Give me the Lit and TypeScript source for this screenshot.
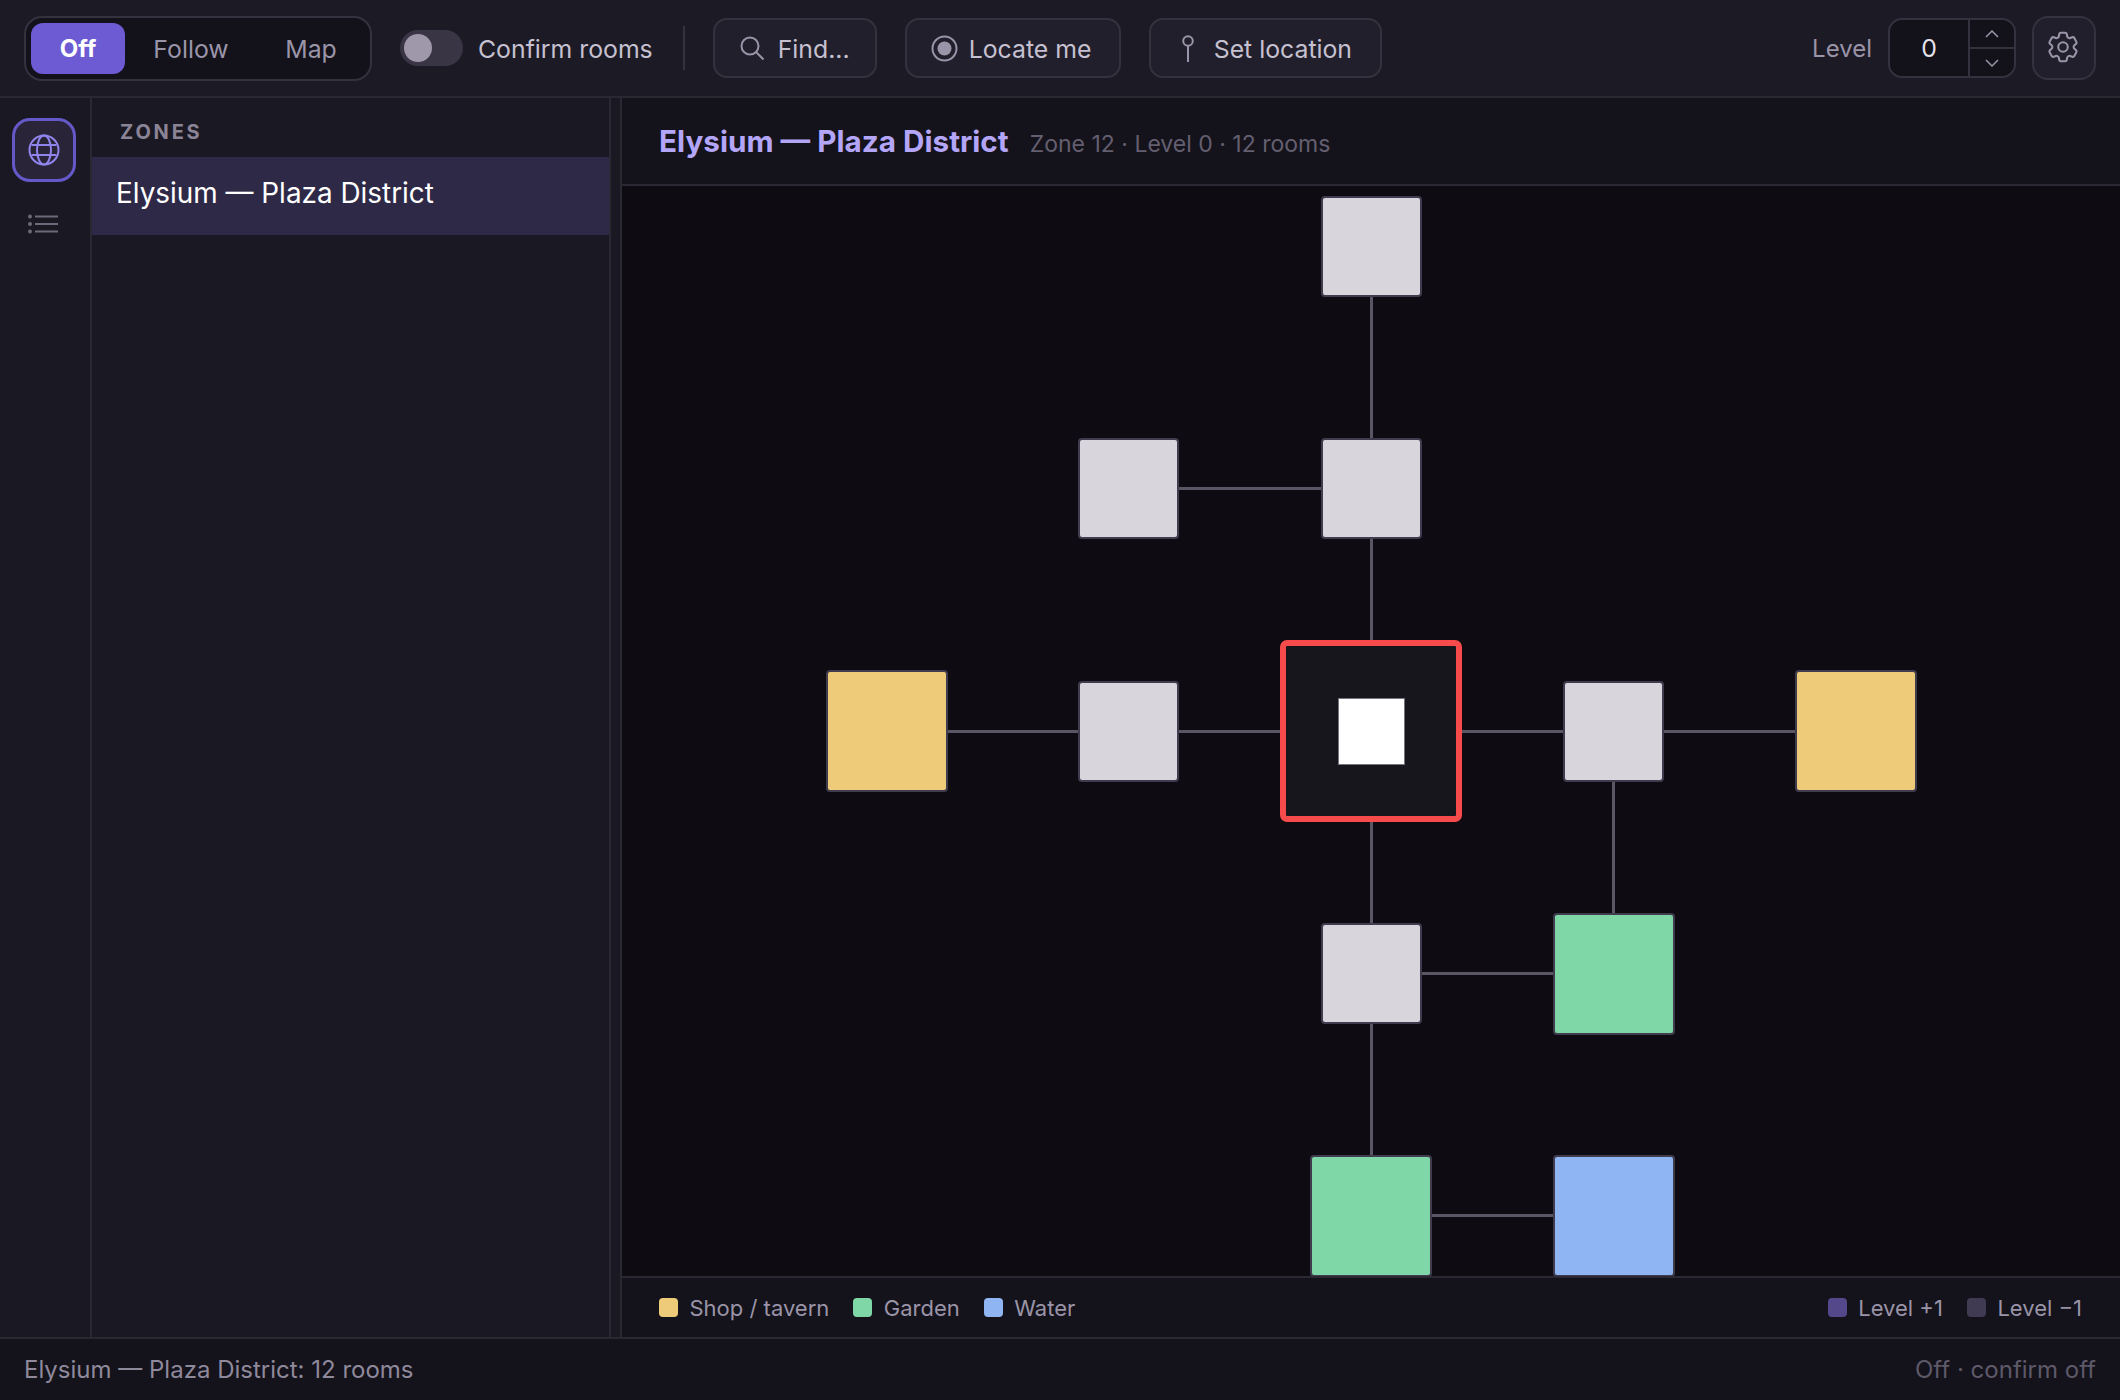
import { LitElement, html, css, svg } from "lit";
import { customElement } from "lit/decorators.js";

type Room = { c: number; r: number; kind: string };
const COLS = [886.5, 1128.5, 1371, 1613.5, 1855.5];
const ROWS = [246.5, 488.5, 731, 973.5, 1215.5];
const ROOMS: Room[] = [
  { c: 2, r: 0, kind: "plain" },
  { c: 1, r: 1, kind: "plain" },
  { c: 2, r: 1, kind: "plain" },
  { c: 0, r: 2, kind: "shop" },
  { c: 1, r: 2, kind: "plain" },
  { c: 2, r: 2, kind: "cur" },
  { c: 3, r: 2, kind: "plain" },
  { c: 4, r: 2, kind: "shop" },
  { c: 2, r: 3, kind: "plain" },
  { c: 3, r: 3, kind: "garden" },
  { c: 2, r: 4, kind: "garden" },
  { c: 3, r: 4, kind: "water" },
];
const LINKS: [number, number, number, number][] = [
  [2, 0, 2, 1],
  [1, 1, 2, 1],
  [2, 1, 2, 2],
  [0, 2, 1, 2],
  [1, 2, 2, 2],
  [2, 2, 3, 2],
  [3, 2, 4, 2],
  [3, 2, 3, 3],
  [2, 2, 2, 3],
  [2, 3, 3, 3],
  [2, 3, 2, 4],
  [2, 4, 3, 4],
];
const CANVAS_X = 622;
const CANVAS_Y = 186;
const SIZE: Record<string, number> = { plain: 101, shop: 122, garden: 122, water: 122, cur: 182 };
const px = (v: number) => Math.floor(v) + 0.5;

@customElement("app-root")
export class AppRoot extends LitElement {
  static styles = css`
    :host {
      display: flex;
      flex-direction: column;
      width: 2120px;
      height: 1400px;
      overflow: hidden;
      font-family: Inter, "Liberation Sans", sans-serif;
      background: #1a1822;
      color: #d8d5dd;
      font-size: 24px;
    }
    .top {
      height: 98px;
      box-sizing: border-box;
      flex: none;
      display: flex;
      align-items: center;
      padding: 0 24px;
      background: #1c1a25;
      border-bottom: 2px solid #2a2833;
      font-size: 24.8px;
    }
    .seg {
      display: flex;
      align-items: stretch;
      width: 348px;
      height: 65px;
      box-sizing: border-box;
      padding: 5px;
      background: #13111a;
      border: 2px solid #35323f;
      border-radius: 18px;
    }
    .seg span {
      display: flex;
      align-items: center;
      justify-content: center;
      color: #9a94a8;
      border-radius: 12px;
      padding-top: 1px;
    }
    .seg .on {
      width: 94px;
      background: #6c5bd3;
      color: #fff;
      font-weight: 700;
      font-size: 24px;
    }
    .seg .follow { width: 132px; }
    .seg .map { width: 100px; margin-left: 4px; }
    .toggle {
      margin-left: 28px;
      width: 63px;
      height: 36px;
      border-radius: 18px;
      background: #3a3545;
      display: flex;
      align-items: center;
      padding-left: 4px;
      box-sizing: border-box;
    }
    .knob {
      width: 28px;
      height: 28px;
      border-radius: 50%;
      background: #9f98ab;
    }
    .lbl { margin-left: 15px; color: #c6c1d0; padding-top: 1px; }
    .div {
      margin: 0 28px 0 30px;
      width: 2px;
      height: 44px;
      background: #35323f;
    }
    .btn {
      display: flex;
      align-items: center;
      height: 60px;
      box-sizing: border-box;
      border: 2px solid #35323f;
      border-radius: 14px;
      background: #221f2c;
      color: #c6c1d0;
    }
    .btn span { padding-top: 1px; }
    .btn svg { flex: none; }
    .b1 { width: 164px; margin-right: 28px; padding-left: 25px; gap: 14px; }
    .b2 { width: 216px; margin-right: 28px; padding-left: 24px; gap: 11px; }
    .b3 { width: 233px; padding-left: 30px; gap: 19px; }
    .grow { flex: 1; }
    .lvl { color: #9a94a8; margin-right: 16px; font-size: 24px; }
    .stepper {
      display: flex;
      width: 128px;
      height: 60px;
      box-sizing: border-box;
      border: 2px solid #35323f;
      border-radius: 14px;
      background: #13111a;
      overflow: hidden;
    }
    .val {
      flex: 1;
      display: flex;
      align-items: center;
      justify-content: center;
      color: #e4e1ea;
      border-right: 2px solid #35323f;
    }
    .arrows { width: 44px; display: flex; flex-direction: column; }
    .arrows div {
      flex: 1;
      display: flex;
      align-items: center;
      justify-content: center;
    }
    .arrows div:first-child { border-bottom: 2px solid #35323f; }
    .gear {
      margin-left: 16px;
      width: 64px;
      height: 64px;
      box-sizing: border-box;
      border: 2px solid #35323f;
      border-radius: 16px;
      background: #221f2c;
      display: flex;
      align-items: center;
      justify-content: center;
      padding: 0 3px 3px 0;
    }
    .mid { flex: 1; display: flex; min-height: 0; }
    .rail {
      width: 92px;
      box-sizing: border-box;
      flex: none;
      border-right: 2px solid #2a2833;
      display: flex;
      flex-direction: column;
      align-items: center;
      padding: 20px 2px 0 0;
      gap: 10px;
      background: #1a1822;
    }
    .rb {
      width: 64px;
      height: 64px;
      box-sizing: border-box;
      border-radius: 18px;
      display: flex;
      align-items: center;
      justify-content: center;
      border: 3px solid transparent;
    }
    .rb.active { border-color: #6558c8; background: #2a2438; }
    .list { padding-right: 2px; }
    .zones { width: 517px; flex: none; background: #1a1822; display: flex; flex-direction: column; }
    .zh {
      height: 59px;
      display: flex;
      align-items: center;
      padding: 9px 0 0 28px;
      box-sizing: border-box;
      font-size: 20px;
      font-weight: 700;
      letter-spacing: 2.8px;
      color: #8a8496;
    }
    .zi {
      height: 78px;
      box-sizing: border-box;
      display: flex;
      align-items: center;
      padding: 0 0 6px 24px;
      background: #2e2947;
      color: #fff;
      font-size: 27.9px;
    }
    .split {
      width: 13px;
      box-sizing: border-box;
      flex: none;
      border-left: 2px solid #2a2833;
      border-right: 2px solid #2a2833;
      background: #1a1822;
    }
    .main { flex: 1; display: flex; flex-direction: column; min-width: 0; background: #14121a; }
    .th {
      height: 88px;
      box-sizing: border-box;
      flex: none;
      display: flex;
      align-items: center;
      padding-left: 37px;
      border-bottom: 2px solid #2a2833;
    }
    .thi { display: flex; align-items: baseline; gap: 21px; }
    .tt { font-size: 29.7px; font-weight: 700; color: #b3a5f7; }
    .ts { color: #645f70; font-size: 23px; }
    .canvas { flex: 1; position: relative; background: #0e0c12; overflow: hidden; }
    .links { position: absolute; inset: 0; width: 100%; height: 100%; }
    .room {
      position: absolute;
      box-sizing: border-box;
      border: 2px solid #3f3c4e;
      border-radius: 4px;
    }
    .plain { background: #d8d5dd; }
    .shop { background: #eecb78; }
    .garden { background: #7fd6a6; }
    .water { background: #8fb5f2; }
    .cur {
      background: #18161d;
      border: 6px solid #f74a4a;
      border-radius: 7px;
      display: flex;
      align-items: center;
      justify-content: center;
    }
    .cur i {
      display: block;
      width: 67px;
      height: 67px;
      box-sizing: border-box;
      background: #fff;
      border: 1px solid #77747f;
    }
    .legend {
      height: 61px;
      box-sizing: border-box;
      flex: none;
      display: flex;
      align-items: center;
      padding: 0 38px 0 37px;
      border-top: 2px solid #2a2833;
      font-size: 22px;
      color: #9a94a8;
    }
    .li { display: flex; align-items: center; gap: 11.5px; margin-right: 24px; }
    .li:last-child { margin-right: 0; }
    .sw { width: 19px; height: 19px; border-radius: 4px; }
    .status {
      height: 63px;
      box-sizing: border-box;
      flex: none;
      display: flex;
      align-items: center;
      justify-content: space-between;
      padding: 0 24px;
      background: #14121a;
      border-top: 2px solid #2a2833;
      color: #8f899c;
    }
    .status .r { color: #5e5969; }
  `;

  private link(l: [number, number, number, number]) {
    return svg`<line x1=${px(COLS[l[0]] - CANVAS_X)} y1=${px(ROWS[l[1]] - CANVAS_Y)} x2=${px(COLS[l[2]] - CANVAS_X)} y2=${px(ROWS[l[3]] - CANVAS_Y)} stroke="#5a5666" stroke-width="3"></line>`;
  }

  private room(r: Room) {
    const s = SIZE[r.kind];
    const st = `left:${Math.round(COLS[r.c] - CANVAS_X - s / 2)}px;top:${Math.round(ROWS[r.r] - CANVAS_Y - s / 2)}px;width:${s}px;height:${s}px`;
    return html`<div class="room ${r.kind}" style=${st}>${r.kind === "cur" ? html`<i></i>` : ""}</div>`;
  }

  render() {
    return html`
      <div class="top">
        <div class="seg">
          <span class="on">Off</span><span class="follow">Follow</span><span class="map">Map</span>
        </div>
        <div class="toggle"><div class="knob"></div></div>
        <div class="lbl">Confirm rooms</div>
        <div class="div"></div>
        <div class="btn b1">
          <svg width="24" height="24" viewBox="0 0 24 24" fill="none" stroke="#9a94a8" stroke-width="2"><circle cx="10" cy="10" r="8.5"></circle><path d="M16 16l7.5 7.5"></path></svg>
          <span>Find...</span>
        </div>
        <div class="btn b2">
          <svg width="27" height="27" viewBox="0 0 27 27"><circle cx="13.5" cy="13.5" r="12" fill="none" stroke="#9a94a8" stroke-width="2"></circle><circle cx="13.5" cy="13.5" r="7" fill="#9a94a8"></circle></svg>
          <span>Locate me</span>
        </div>
        <div class="btn b3">
          <svg width="14" height="27" viewBox="0 0 14 27" fill="none" stroke="#9a94a8" stroke-width="2"><circle cx="7" cy="6" r="4.8"></circle><path d="M7 10.8V27"></path></svg>
          <span>Set location</span>
        </div>
        <div class="grow"></div>
        <div class="lvl">Level</div>
        <div class="stepper">
          <div class="val">0</div>
          <div class="arrows">
            <div><svg width="14" height="8" viewBox="0 0 14 8" fill="none" stroke="#9a94a8" stroke-width="1.5"><path d="M1 7l6-6 6 6"></path></svg></div>
            <div><svg width="14" height="8" viewBox="0 0 14 8" fill="none" stroke="#9a94a8" stroke-width="1.5"><path d="M1 1l6 6 6-6"></path></svg></div>
          </div>
        </div>
        <div class="gear">
          <svg width="38" height="38" viewBox="0 0 24 24" fill="none" stroke="#9a94a8" stroke-width="1.3" stroke-linejoin="round" stroke-linecap="round"><path d="M9.594 3.94c.09-.542.56-.94 1.11-.94h2.593c.55 0 1.02.398 1.11.94l.213 1.281c.063.374.313.686.645.87.074.04.147.083.22.127.325.196.72.257 1.075.124l1.217-.456a1.125 1.125 0 011.37.49l1.296 2.247a1.125 1.125 0 01-.26 1.431l-1.003.827c-.293.24-.438.613-.431.992a6.759 6.759 0 010 .255c-.007.378.138.75.43.99l1.005.828c.424.35.534.954.26 1.43l-1.298 2.247a1.125 1.125 0 01-1.369.491l-1.217-.456c-.355-.133-.75-.072-1.076.124a6.57 6.57 0 01-.22.128c-.331.183-.581.495-.644.869l-.213 1.28c-.09.543-.56.941-1.11.941h-2.594c-.55 0-1.02-.398-1.11-.94l-.213-1.281c-.062-.374-.312-.686-.644-.87a6.52 6.52 0 01-.22-.127c-.325-.196-.72-.257-1.076-.124l-1.217.456a1.125 1.125 0 01-1.369-.49l-1.297-2.247a1.125 1.125 0 01.26-1.431l1.004-.827c.292-.24.437-.613.43-.992a6.932 6.932 0 010-.255c.007-.378-.138-.75-.43-.99l-1.004-.828a1.125 1.125 0 01-.26-1.43l1.297-2.247a1.125 1.125 0 011.37-.491l1.216.456c.356.133.751.072 1.076-.124.072-.044.146-.087.22-.128.332-.183.582-.495.644-.869l.214-1.281z"></path><circle cx="12" cy="12" r="3"></circle></svg>
        </div>
      </div>
      <div class="mid">
        <div class="rail">
          <div class="rb active">
            <svg width="32" height="32" viewBox="0 0 32 32" fill="none" stroke="#8f85ec" stroke-width="2"><circle cx="16" cy="16" r="14.5"></circle><ellipse cx="16" cy="16" rx="7" ry="14.5"></ellipse><path d="M3.5 11h25M3.5 21h25"></path></svg>
          </div>
          <div class="rb list">
            <svg width="30" height="20" viewBox="0 0 30 20" fill="none" stroke="#6e6979" stroke-width="2"><path d="M7 2.5h23M7 10h23M7 17.5h23"></path><circle cx="2" cy="2.5" r="2" fill="#6e6979" stroke="none"></circle><circle cx="2" cy="10" r="2" fill="#6e6979" stroke="none"></circle><circle cx="2" cy="17.5" r="2" fill="#6e6979" stroke="none"></circle></svg>
          </div>
        </div>
        <div class="zones">
          <div class="zh">ZONES</div>
          <div class="zi">Elysium — Plaza District</div>
        </div>
        <div class="split"></div>
        <div class="main">
          <div class="th">
            <div class="thi">
              <div class="tt">Elysium — Plaza District</div>
              <div class="ts">Zone 12 · Level 0 · 12 rooms</div>
            </div>
          </div>
          <div class="canvas">
            <svg class="links">${LINKS.map((l) => this.link(l))}</svg>
            ${ROOMS.map((r) => this.room(r))}
          </div>
          <div class="legend">
            <div class="li"><div class="sw" style="background:#eecb78"></div>Shop / tavern</div>
            <div class="li"><div class="sw" style="background:#7fd6a6"></div>Garden</div>
            <div class="li"><div class="sw" style="background:#8fb5f2"></div>Water</div>
            <div class="grow"></div>
            <div class="li"><div class="sw" style="background:#54478a"></div>Level +1</div>
            <div class="li"><div class="sw" style="background:#403b52"></div>Level −1</div>
          </div>
        </div>
      </div>
      <div class="status">
        <div>Elysium — Plaza District: 12 rooms</div>
        <div class="r">Off · confirm off</div>
      </div>
    `;
  }
}
